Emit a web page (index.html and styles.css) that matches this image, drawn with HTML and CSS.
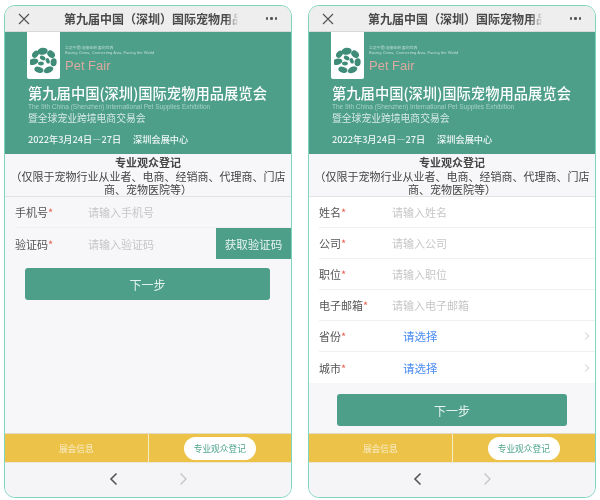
FILE: index.html
```html
<!DOCTYPE html>
<html lang="zh-CN">
<head>
<meta charset="utf-8">
<title>Pet Fair</title>
<link rel="stylesheet" href="styles.css">
</head>
<body>
<svg class="defs" width="0" height="0" aria-hidden="true">
  <symbol id="flower" viewBox="0 0 32 32">
    <g fill="#3f8d78">
      <ellipse cx="15" cy="5" rx="6" ry="4.200" transform="rotate(-8 15 5)" />
      <ellipse cx="25" cy="8.500" rx="5" ry="3.800" transform="rotate(40 25 8.500)" />
      <ellipse cx="28" cy="18" rx="4.800" ry="3.600" transform="rotate(95 28 18)" />
      <ellipse cx="22" cy="27" rx="6" ry="3.500" transform="rotate(-25 22 27)" />
      <ellipse cx="10.500" cy="27" rx="5.500" ry="3.400" transform="rotate(20 10.500 27)" />
      <ellipse cx="4" cy="17.500" rx="6" ry="3.600" transform="rotate(-15 4 17.500)" />
      <ellipse cx="6.500" cy="8.500" rx="4.800" ry="3.400" transform="rotate(-50 6.500 8.500)" />
      <ellipse cx="15" cy="13" rx="3.600" ry="2.500" transform="rotate(30 15 13)" />
      <ellipse cx="21" cy="16.500" rx="3.400" ry="2.300" transform="rotate(70 21 16.500)" />
      <ellipse cx="13" cy="19.500" rx="3.400" ry="2.300" />
    </g>
  </symbol>
  <symbol id="close" viewBox="0 0 12 12">
    <path d="M1 1l10 10M11 1L1 11" fill="none" stroke="currentColor" stroke-width="1.200" />
  </symbol>
  <symbol id="back" viewBox="0 0 9 14">
    <path d="M7.500 1.500L2 7l5.500 5.500" fill="none" stroke="currentColor" stroke-width="1.600" />
  </symbol>
  <symbol id="fwd" viewBox="0 0 9 14">
    <path d="M1.500 1.500L7 7l-5.500 5.500" fill="none" stroke="currentColor" stroke-width="1.300" />
  </symbol>
</svg>

<main class="screens">
  <section class="phone">
    <header class="topbar">
      <svg class="close-icon"><use href="#close" /></svg>
      <div class="topbar-title">第九届中国（深圳）国际宠物用品</div>
      <div class="more"><i></i><i></i><i></i></div>
    </header>
    <div class="banner">
      <div class="brand">
        <div class="logo"><svg class="flower"><use href="#flower" /></svg></div>
        <div class="brand-text">
          <div class="tag-cn">立足中国 连接亚洲 面向世界</div>
          <div class="tag-en">Basing China, Connecting Asia, Facing the World</div>
          <div class="petfair">Pet Fair</div>
        </div>
      </div>
      <div class="banner-title">第九届中国(深圳)国际宠物用品展览会</div>
      <div class="banner-en">The 9th China (Shenzhen) International Pet Supplies Exhibition</div>
      <div class="banner-sub">暨全球宠业跨境电商交易会</div>
      <div class="banner-date"><span>2022年3月24日—27日</span><span>深圳会展中心</span></div>
    </div>
    <div class="content">
      <div class="intro">
        <div class="intro-title">专业观众登记</div>
        <div>（仅限于宠物行业从业者、电商、经销商、代理商、门店商、宠物医院等）</div>
      </div>
      <div class="form">
        <div class="row"><span class="label">手机号<b>*</b></span><span class="ph">请输入手机号</span></div>
        <div class="row row-code"><span class="label">验证码<b>*</b></span><span class="ph">请输入验证码</span><span class="code-btn">获取验证码</span></div>
      </div>
      <div class="next next-a">下一步</div>
    </div>
    <nav class="tabs">
      <div class="tab">展会信息</div>
      <div class="tab tab-on"><span class="pill">专业观众登记</span></div>
    </nav>
    <footer class="navbar">
      <svg class="nav-icon nav-back"><use href="#back" /></svg>
      <svg class="nav-icon nav-fwd"><use href="#fwd" /></svg>
    </footer>
  </section>

  <section class="phone">
    <header class="topbar">
      <svg class="close-icon"><use href="#close" /></svg>
      <div class="topbar-title">第九届中国（深圳）国际宠物用品</div>
      <div class="more"><i></i><i></i><i></i></div>
    </header>
    <div class="banner">
      <div class="brand">
        <div class="logo"><svg class="flower"><use href="#flower" /></svg></div>
        <div class="brand-text">
          <div class="tag-cn">立足中国 连接亚洲 面向世界</div>
          <div class="tag-en">Basing China, Connecting Asia, Facing the World</div>
          <div class="petfair">Pet Fair</div>
        </div>
      </div>
      <div class="banner-title">第九届中国(深圳)国际宠物用品展览会</div>
      <div class="banner-en">The 9th China (Shenzhen) International Pet Supplies Exhibition</div>
      <div class="banner-sub">暨全球宠业跨境电商交易会</div>
      <div class="banner-date"><span>2022年3月24日—27日</span><span>深圳会展中心</span></div>
    </div>
    <div class="content">
      <div class="intro">
        <div class="intro-title">专业观众登记</div>
        <div>（仅限于宠物行业从业者、电商、经销商、代理商、门店商、宠物医院等）</div>
      </div>
      <div class="form form-white">
        <div class="row"><span class="label">姓名<b>*</b></span><span class="ph">请输入姓名</span></div>
        <div class="row"><span class="label">公司<b>*</b></span><span class="ph">请输入公司</span></div>
        <div class="row"><span class="label">职位<b>*</b></span><span class="ph">请输入职位</span></div>
        <div class="row"><span class="label">电子邮箱<b>*</b></span><span class="ph">请输入电子邮箱</span></div>
        <div class="row"><span class="label">省份<b>*</b></span><span class="pick">请选择</span><svg class="row-arrow"><use href="#fwd" /></svg></div>
        <div class="row row-last"><span class="label">城市<b>*</b></span><span class="pick">请选择</span><svg class="row-arrow"><use href="#fwd" /></svg></div>
      </div>
      <div class="next next-b">下一步</div>
    </div>
    <nav class="tabs">
      <div class="tab">展会信息</div>
      <div class="tab tab-on"><span class="pill">专业观众登记</span></div>
    </nav>
    <footer class="navbar">
      <svg class="nav-icon nav-back"><use href="#back" /></svg>
      <svg class="nav-icon nav-fwd"><use href="#fwd" /></svg>
    </footer>
  </section>
</main>
</body>
</html>
```

FILE: styles.css
```css
* { box-sizing: border-box; }

html, body {
  margin: 0;
  height: 100%;
  background: #ffffff;
}

body {
  font-family: "Noto Sans CJK SC", "Noto Sans", sans-serif;
  color: #444;
  overflow: hidden;
}

.defs { position: absolute; }

.screens {
  display: flex;
  gap: 16px;
  padding: 5px 0 0 4px;
  filter: blur(0.4px);
}

.phone {
  width: 288px;
  height: 493px;
  border: 1px solid #7fd6bf;
  border-radius: 11px;
  overflow: hidden;
  display: flex;
  flex-direction: column;
  background: #f7f6f9;
}

/* top bar */
.topbar {
  height: 26px;
  flex: none;
  background: #eeeeee;
  border-bottom: 1px solid #d9d9d9;
  display: flex;
  align-items: center;
  padding: 0 14px 0 13px;
}

.close-icon {
  width: 12px;
  height: 12px;
  flex: none;
  color: #555;
}

.topbar-title {
  margin-left: 34px;
  font-size: 12px;
  font-weight: 700;
  color: #4a4a4a;
  white-space: nowrap;
  -webkit-mask-image: linear-gradient(to right, #000 90%, transparent 97%);
  mask-image: linear-gradient(to right, #000 90%, transparent 97%);
}

.more {
  margin-left: auto;
  display: flex;
  gap: 2px;
}

.more i {
  width: 2.500px;
  height: 2.500px;
  border-radius: 50%;
  background: #555;
}

/* banner */
.banner {
  height: 122px;
  flex: none;
  background: #4e9f8a;
  color: #f2f8f6;
  padding-left: 23px;
}

.brand {
  display: flex;
  height: 47px;
  margin-left: -1px;
}

.logo {
  width: 33px;
  height: 47px;
  background: #ffffff;
  border-radius: 0 0 2px 2px;
  display: flex;
  justify-content: center;
  padding-top: 15px;
}

.flower {
  width: 27px;
  height: 27px;
}

.brand-text {
  padding: 12px 0 0 5px;
}

.tag-cn,
.tag-en {
  line-height: 6px;
  white-space: nowrap;
  color: #bcdcd3;
}

.tag-cn { font-size: 3.900px; }

.tag-en {
  font-family: "Liberation Sans", sans-serif;
  font-size: 4.100px;
}

.petfair {
  font-family: "Liberation Sans", sans-serif;
  font-size: 13px;
  line-height: 15px;
  margin-top: 2px;
  color: #dba9a0;
}

.banner-title {
  margin-top: 4px;
  font-size: 14.300px;
  line-height: 20px;
  font-weight: 500;
  white-space: nowrap;
  color: #ffffff;
}

.banner-en {
  font-family: "Liberation Sans", sans-serif;
  font-size: 6.500px;
  line-height: 8px;
  color: #a6d2c6;
  white-space: nowrap;
}

.banner-sub {
  font-size: 9.800px;
  line-height: 14px;
  color: #d5eae4;
}

.banner-date {
  margin-top: 8px;
  display: flex;
  gap: 12px;
  font-size: 9.200px;
  line-height: 13px;
  font-weight: 500;
  color: #eef7f4;
  white-space: nowrap;
}

/* content */
.content {
  flex: 1;
  display: flex;
  flex-direction: column;
  min-height: 0;
}

.intro {
  height: 43px;
  flex: none;
  padding: 2px 4px 0;
  font-size: 11px;
  line-height: 13.500px;
  text-align: center;
  color: #444;
  border-bottom: 1px solid #e3e3e3;
}

.intro-title {
  font-weight: 700;
}

.form-white {
  background: #ffffff;
}

.row {
  height: 31px;
  margin-left: 10px;
  display: flex;
  align-items: center;
  position: relative;
  font-size: 11px;
  border-bottom: 1px solid #f0eff2;
}

.row-last { border-bottom: 0; }

.label {
  width: 73px;
  flex: none;
  color: #555;
  white-space: nowrap;
}

.label b {
  color: #e8604f;
  font-weight: 400;
}

.ph { color: #c6c6c8; }

.pick {
  margin-left: 11px;
  color: #4a8cf2;
  font-size: 11.500px;
}

.row-code { border-bottom: 0; }

.code-btn {
  position: absolute;
  right: 0;
  top: 0;
  width: 75px;
  height: 31px;
  background: #4e9f8a;
  color: #e9f5f1;
  font-size: 11.500px;
  display: flex;
  align-items: center;
  justify-content: center;
}

.row-arrow {
  width: 6px;
  height: 10px;
  margin-left: auto;
  margin-right: 5px;
  color: #bdbdbf;
}

.next {
  height: 32px;
  background: #4e9f8a;
  border-radius: 3px;
  color: #e6f3ef;
  font-size: 12px;
  display: flex;
  align-items: center;
  justify-content: center;
  flex: none;
}

.next-a { margin: 9px 21px 0 20px; }
.next-b { margin: 11px 28px 0 28px; }

/* tabs */
.tabs {
  height: 30px;
  flex: none;
  display: flex;
  background: #ecc248;
  border-top: 1px solid #e3dcc4;
  border-bottom: 1px solid #ece6d6;
}

.tab {
  flex: 1;
  display: flex;
  align-items: center;
  justify-content: center;
  font-size: 8.700px;
  color: #f9eecb;
}

.tab-on {
  border-left: 1px solid #f7ecc8;
}

.pill {
  width: 72px;
  height: 23px;
  border-radius: 12px;
  background: #ffffff;
  color: #4fa48d;
  display: flex;
  align-items: center;
  justify-content: center;
}

/* bottom nav */
.navbar {
  height: 34px;
  flex: none;
  display: flex;
  align-items: center;
  justify-content: center;
  gap: 61px;
  background: #f5f4f7;
  padding-bottom: 2px;
}

.nav-icon {
  width: 9px;
  height: 14px;
}

.nav-back { color: #555; }
.nav-fwd { color: #c4c4c6; }
```
